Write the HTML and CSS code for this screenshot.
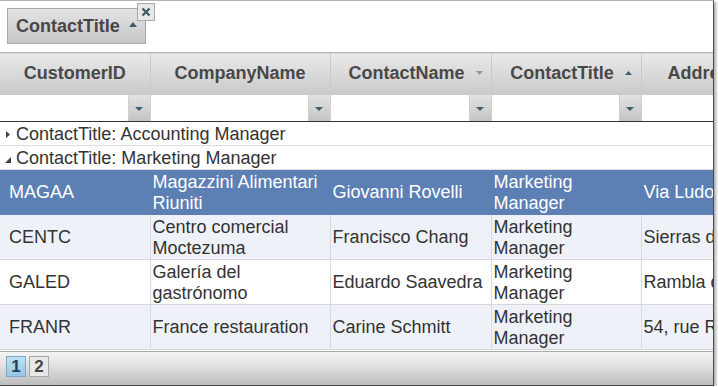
FILE: index.html
```html
<!DOCTYPE html>
<html>
<head>
<meta charset="utf-8">
<link rel="stylesheet" href="styles.css">
</head>
<body>
<div class="grid">
  <div class="group-panel">
    <div class="group-btn">
      <span class="group-label">ContactTitle</span>
      <svg class="tri" width="8" height="5" viewBox="0 0 8 5"><path d="M4 0 L8 5 L0 5 Z" fill="#3e5d6c"/></svg>
      <span class="group-close">
        <svg width="10" height="10" viewBox="0 0 10 10"><path d="M1.5 1.5 L8.5 8.5 M8.5 1.5 L1.5 8.5" stroke="#3e5d6c" stroke-width="2.4"/></svg>
      </span>
    </div>
  </div>
  <div class="table-wrap">
  <table class="tbl">
    <colgroup>
      <col class="c1"><col class="c2"><col class="c3"><col class="c4"><col class="c5">
    </colgroup>
    <thead>
      <tr class="hdr">
        <th>CustomerID</th>
        <th>CompanyName</th>
        <th class="sorted">ContactName <svg class="tri" width="7" height="4" viewBox="0 0 7 4"><path d="M0 0 L7 0 L3.5 4 Z" fill="#8a9aa2"/></svg></th>
        <th class="sorted">ContactTitle <svg class="tri" width="7" height="4" viewBox="0 0 7 4"><path d="M3.5 0 L7 4 L0 4 Z" fill="#3e5d6c"/></svg></th>
        <th class="last">Address</th>
      </tr>
      <tr class="flt">
        <td><div class="fcell"><span class="finput"></span><span class="fbtn"><svg width="8" height="4" viewBox="0 0 8 4"><path d="M0 0 L8 0 L4 4 Z" fill="#3e5d6c"/></svg></span></div></td>
        <td><div class="fcell"><span class="finput"></span><span class="fbtn"><svg width="8" height="4" viewBox="0 0 8 4"><path d="M0 0 L8 0 L4 4 Z" fill="#3e5d6c"/></svg></span></div></td>
        <td><div class="fcell"><span class="finput"></span><span class="fbtn"><svg width="8" height="4" viewBox="0 0 8 4"><path d="M0 0 L8 0 L4 4 Z" fill="#3e5d6c"/></svg></span></div></td>
        <td><div class="fcell"><span class="finput"></span><span class="fbtn"><svg width="8" height="4" viewBox="0 0 8 4"><path d="M0 0 L8 0 L4 4 Z" fill="#3e5d6c"/></svg></span></div></td>
        <td class="last"><div class="fcell"><span class="finput"></span></div></td>
      </tr>
    </thead>
    <tbody>
      <tr class="grp">
        <td colspan="5"><svg class="gtri" width="4" height="7" viewBox="0 0 4 7"><path d="M0 0 L4 3.5 L0 7 Z" fill="#444"/></svg>ContactTitle: Accounting Manager</td>
      </tr>
      <tr class="grp">
        <td colspan="5"><svg class="gtri open" width="6" height="6" viewBox="0 0 6 6"><path d="M6 0 L6 6 L0 6 Z" fill="#444"/></svg>ContactTitle: Marketing Manager</td>
      </tr>
      <tr class="row sel">
        <td>MAGAA</td><td>Magazzini Alimentari Riuniti</td><td>Giovanni Rovelli</td><td>Marketing Manager</td><td>Via Ludovico il Moro 22</td>
      </tr>
      <tr class="row alt">
        <td>CENTC</td><td>Centro comercial Moctezuma</td><td>Francisco Chang</td><td>Marketing Manager</td><td>Sierras de Granada 9993</td>
      </tr>
      <tr class="row">
        <td>GALED</td><td>Galería del gastrónomo</td><td>Eduardo Saavedra</td><td>Marketing Manager</td><td>Rambla de Cataluña, 23</td>
      </tr>
      <tr class="row alt">
        <td>FRANR</td><td>France restauration</td><td>Carine Schmitt</td><td>Marketing Manager</td><td>54, rue Royale</td>
      </tr>
    </tbody>
  </table>
  </div>
  <div class="pager">
    <span class="page cur">1</span>
    <span class="page">2</span>
  </div>
</div>
</body>
</html>
```

FILE: styles.css
```css
html, body {
  margin: 0;
  padding: 0;
  background: #fff;
}
body {
  font-family: "Liberation Sans", Arial, sans-serif;
  color: #333;
}
.grid {
  width: 713px;
  height: 384px;
  border-top: 1px solid #b4b4b4;
  border-right: 1px solid #4a4a4a;
  border-bottom: 1px solid #4a4a4a;
  box-shadow: 2px 2px 3px rgba(0,0,0,0.35);
  overflow: hidden;
  display: flex;
  flex-direction: column;
  background: #fff;
}
.group-panel {
  height: 51px;
  flex: none;
  padding: 7px 0 0 7px;
  box-sizing: border-box;
}
.group-btn {
  position: relative;
  display: inline-flex;
  align-items: center;
  height: 36px;
  box-sizing: border-box;
  width: 139px;
  padding: 0 0 0 8px;
  border: 1px solid #a9a9a9;
  background: linear-gradient(#e4e4e4, #c6c6c6);
  font-weight: bold;
  font-size: 18px;
  color: #474747;
}
.group-btn .tri {
  margin-left: 9px;
  margin-top: -3px;
}
.group-close {
  position: absolute;
  left: 129px;
  top: -6px;
  width: 18px;
  height: 18px;
  box-sizing: border-box;
  border: 1px solid #ababab;
  background: #e8e8e8;
  display: flex;
  align-items: center;
  justify-content: center;
}
.table-wrap {
  flex: 1;
  overflow: hidden;
}
.tbl {
  table-layout: fixed;
  border-collapse: collapse;
  width: 851px;
  font-size: 18px;
}
.c1 { width: 150px; }
.c2 { width: 180px; }
.c3 { width: 161px; }
.c4 { width: 150px; }
.c5 { width: 210px; }
.hdr th {
  height: 42px;
  padding: 0;
  border-top: 1px solid #b2b2b2;
  border-left: 1px solid #c9c9c9;
  background: linear-gradient(#e9e9e9, #c9c9c9);
  color: #484848;
  font-weight: bold;
  text-align: center;
  white-space: nowrap;
  box-sizing: border-box;
}
.hdr th:first-child { border-left: none; }
.hdr th.sorted { padding-left: 10px; }
.hdr th.last { text-align: left; padding-left: 26px; }
.hdr .tri { margin-left: 6px; vertical-align: 4px; }
.flt td {
  padding: 0;
  height: 26px;
  border-left: 1px solid #d0d0d0;
  border-bottom: 1px solid #333;
}
.flt td:first-child { border-left: none; }
.fcell {
  display: flex;
  height: 26px;
}
.finput { flex: 1; background: #fff; }
.fbtn {
  width: 22px;
  flex: none;
  background: linear-gradient(#e2e2e2, #c4c4c4);
  border-left: 1px solid #cfcfcf;
  display: flex;
  align-items: center;
  justify-content: center;
  padding-top: 2px;
  box-sizing: border-box;
}
.grp td {
  height: 21px;
  padding: 2px 0 0 6px;
  border-bottom: 1px solid #dedede;
  color: #333;
  white-space: nowrap;
  line-height: 21px;
}
.gtri { margin-right: 6px; vertical-align: 2px; }
.gtri.open { margin-right: 5px; vertical-align: 1px; margin-left: -1px; }
.row td {
  height: 42px;
  padding: 2px 2px 0 2px;
  line-height: 21px;
  border-left: 1px solid #d6dbe2;
  border-bottom: 1px solid #d6d6d6;
  vertical-align: middle;
  overflow: hidden;
}
.row td:first-child { border-left: none; padding-left: 9px; }
.row.alt td { background: #eef2f8; }
.row.sel td {
  background: #5c7fb4;
  color: #fff;
  border-left-color: #5c7fb4;
  border-bottom-color: #5c7fb4;
}
.pager {
  flex: none;
  height: 34px;
  box-sizing: border-box;
  border-top: 1px solid #a9a9a9;
  background: linear-gradient(#f4f4f4 0%, #e2e2e2 40%, #bdbdbd 100%);
  display: flex;
  align-items: flex-start;
  padding: 4px 0 0 6px;
  gap: 3px;
}
.page {
  width: 20px;
  height: 21px;
  box-sizing: border-box;
  border: 1px solid #a6a6a6;
  background: #e8e8e8;
  font-weight: bold;
  font-size: 17px;
  color: #444;
  display: flex;
  align-items: center;
  justify-content: center;
}
.page.cur {
  background: linear-gradient(#bfe0f4, #96c7e6);
  border-color: #7fa8c4;
  color: #1f3f5a;
}
```
